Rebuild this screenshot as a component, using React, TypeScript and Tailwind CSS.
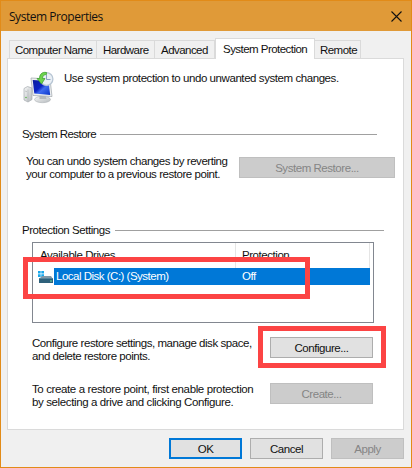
import React from "react";

function ComputerIcon() {
  return (
    <svg width="32" height="33" viewBox="0 0 32 33">
      <defs>
        <linearGradient id="screen" x1="0" y1="0" x2="1" y2="1">
          <stop offset="0" stopColor="#0b1d9c" />
          <stop offset="0.45" stopColor="#0a22c4" />
          <stop offset="0.6" stopColor="#3f6cf0" />
          <stop offset="1" stopColor="#0a35c8" />
        </linearGradient>
        <linearGradient id="metal" x1="0" y1="0" x2="1" y2="1">
          <stop offset="0" stopColor="#f7f8f8" />
          <stop offset="1" stopColor="#b5babd" />
        </linearGradient>
      </defs>
      <path d="M1 17.5L4.5 15.5L9 17V28.5L5 31L1 29Z" fill="url(#metal)" stroke="#a5abaf" strokeWidth="0.7" />
      <path d="M5 18.5V30.5M2 20l2 .7" stroke="#b0b5b8" strokeWidth="0.7" />
      <circle cx="3" cy="26.5" r="0.8" fill="#59b04a" />
      <ellipse cx="19.5" cy="28.5" rx="8" ry="3.2" fill="url(#metal)" stroke="#afb4b7" strokeWidth="0.6" />
      <path d="M16.5 24h6l1 4h-7z" fill="#b5babd" />
      <path d="M8 7L27 8L29 25.5L10 24.5Z" fill="#eef0f0" stroke="#a8afb4" strokeWidth="0.8" />
      <path d="M9.7 9L25.5 10L27.2 24L11.3 22.6Z" fill="url(#screen)" />
      <circle cx="23.5" cy="8" r="6.4" fill="#e9eff5" stroke="#b8c6d4" strokeWidth="1.3" />
      <path d="M23.5 4V8.5H27.5" fill="none" stroke="#8aa2c0" strokeWidth="1" />
      <path d="M23.5 1.5C18.5 .5 16.5 4 16.5 7.5H14L18.5 13L22 7.5H19.5C19.5 5 21 3.5 23.5 3.5Z" fill="#6cd34d" stroke="#369b2b" strokeWidth="0.7" />
    </svg>
  );
}

function DriveIcon() {
  return (
    <svg width="16" height="17" viewBox="0 0 16 17">
      <path d="M0 3h2.7v2.6H0zM3.3 3H6v2.6H3.3zM0 6.3h2.7v2.6H0zM3.3 6.3H6v2.6H3.3z" fill="#18a8ec" />
      <path d="M4 8h9l2 3H1z" fill="#8199a8" />
      <path d="M1 10.5h14V15H1z" fill="#2f617b" />
      <path d="M1 10.5h14" stroke="#56849c" />
      <path d="M12 13h2" stroke="#69dc9d" />
    </svg>
  );
}

function Tab({ label, className }: { label: string; className: string }) {
  return (
    <div className={`flex h-[18px] items-center border-t border-r border-[#dadada] bg-[#f0f0f0] pt-px ${className}`}>
      {label}
    </div>
  );
}

function Button({ label, className, disabled }: { label: string; className: string; disabled?: boolean }) {
  return (
    <button
      disabled={disabled}
      className={`flex h-[21px] shrink-0 items-center justify-center pt-px ${
        disabled ? "border border-[#bfbfbf] bg-[#cccccc] text-[#858585]" : "bg-[#e1e1e1] text-[#111]"
      } ${className}`}
    >
      {label}
    </button>
  );
}

export default function App() {
  return (
    <div className="relative h-[468px] w-[412px] overflow-hidden border border-[#e28b18] bg-[#f0f0f0] font-['Liberation_Sans',Arial,sans-serif] text-[11.5px] leading-[13px] tracking-[-0.45px] whitespace-nowrap text-[#111]">
      <header className="flex h-[30px] items-center justify-between bg-[#e09a38] pr-[9px] pl-2 font-['Open_Sans',sans-serif] text-[12px] tracking-[-0.46px]">
        <span>System Properties</span>
        <svg width="11" height="11" viewBox="0 0 11 11">
          <path d="M.5.5l10 10M10.5.5l-10 10" stroke="#111" strokeWidth="1.1" />
        </svg>
      </header>

      <nav className="flex h-[27px] items-end pl-2 tracking-[-0.54px]">
        <Tab label="Computer Name" className="w-[88px] border-l pl-[5px]" />
        <Tab label="Hardware" className="w-[58px] pl-[6px]" />
        <Tab label="Advanced" className="w-[60px] pl-[6px]" />
        <div className="z-10 -mb-px flex h-[21px] w-[100px] items-center border border-b-0 border-[#dadada] bg-white pl-[7px]">
          System Protection
        </div>
        <Tab label="Remote" className="w-[46px] pl-[5px]" />
      </nav>

      <main className="ml-[6px] h-[372px] w-[397px] border border-[#dadada] bg-white">
        <section className="flex h-[66px] pt-[12px] pl-[15px]">
          <ComputerIcon />
          <p className="pt-px pl-[9px] tracking-[-0.43px]">Use system protection to undo unwanted system changes.</p>
        </section>

        <section className="h-[96px]">
          <div className="flex h-[18px] items-center pl-[14px]">
            <h2 className="w-[78px] tracking-[-0.55px]">System Restore</h2>
            <div className="h-px w-[277px] bg-[#a0a0a0]" />
          </div>
          <div className="flex pt-[12px] pl-[18px]">
            <p className="w-[213px]">
              You can undo system changes by reverting
              <br />
              your computer to a previous restore point.
            </p>
            <Button label="System Restore..." disabled className="mt-[2px] w-[156px]" />
          </div>
        </section>

        <section>
          <div className="flex h-[18px] items-center pl-[14px]">
            <h2 className="w-[93px]">Protection Settings</h2>
            <div className="h-px w-[269px] bg-[#a0a0a0]" />
          </div>
          <div className="ml-[24px] mt-[3px] h-[81px] w-[342px] border border-[#828790] bg-white">
            <div className="flex h-[25px]">
              <span className="w-[203px] border-r border-[#e5e5e5] pt-[6px] pl-[7px]">Available Drives</span>
              <span className="w-[134px] border-r border-[#e5e5e5] pt-[6px] pl-[6px]">Protection</span>
            </div>
            <div className="flex h-[17px] pl-[5px]">
              <DriveIcon />
              <div className="flex w-[316px] items-center bg-[#0078d7] pl-[2px] text-white">
                <span className="w-[186px] tracking-[-0.5px]">Local Disk (C:) (System)</span>
                <span>Off</span>
              </div>
            </div>
          </div>
          <div className="flex pt-[14px] pl-[24px]">
            <p className="w-[238px]">
              Configure restore settings, manage disk space,
              <br />
              and delete restore points.
            </p>
            <Button label="Configure..." className="w-[103px] border border-[#adadad]" />
          </div>
          <div className="flex pt-[20px] pl-[24px]">
            <p className="w-[238px] tracking-[-0.38px]">
              To create a restore point, first enable protection
              <br />
              by selecting a drive and clicking Configure.
            </p>
            <Button label="Create..." disabled className="w-[103px]" />
          </div>
        </section>
      </main>

      <footer className="flex gap-2 pt-[8px] pl-[168px]">
        <Button label="OK" className="w-[73px] border-2 border-[#0078d7]" />
        <Button label="Cancel" className="w-[73px] border border-[#adadad]" />
        <Button label="Apply" disabled className="w-[73px]" />
      </footer>

      <div className="absolute top-[256px] left-[22px] h-[42px] w-[287px] border-5 border-[#fc4444]" />
      <div className="absolute top-[325px] left-[257px] h-[42px] w-[128px] border-5 border-[#fc4444]" />
    </div>
  );
}
